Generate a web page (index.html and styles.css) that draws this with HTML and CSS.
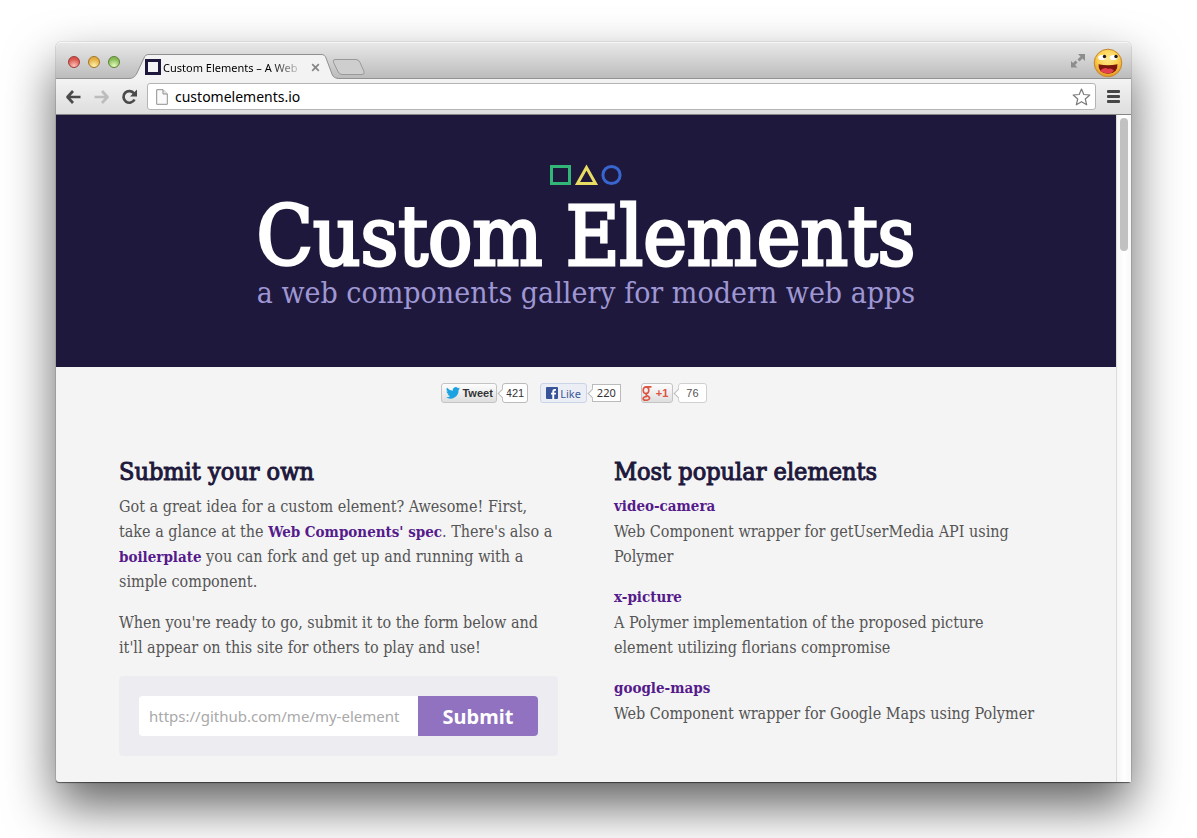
FILE: index.html
```html
<!DOCTYPE html>
<html lang="en">
<head>
<meta charset="utf-8">
<title>Custom Elements</title>
<link rel="stylesheet" href="styles.css">
</head>
<body>
<div class="window">
  <header class="titlebar">
    <div class="lights">
      <button class="light light-red" aria-label="Close window"></button>
      <button class="light light-yellow" aria-label="Minimize window"></button>
      <button class="light light-green" aria-label="Zoom window"></button>
    </div>
    <div class="tab">
      <svg class="tab-shape" width="212" height="25" viewBox="0 0 212 25" aria-hidden="true">
        <path d="M0 24.500C5 24.500 7 23 9 19L16 4C17 1.500 18 .5 21 .5H193C196 .5 197 1.500 198 4L204 20C205 23 207 24.500 212 24.500V25H0Z" fill="#f3f3f3"/>
        <path d="M0 24.500C5 24.500 7 23 9 19L16 4C17 1.500 18 .5 21 .5H193C196 .5 197 1.500 198 4L204 20C205 23 207 24.500 212 24.500" fill="none" stroke="#8f8f8f"/>
      </svg>
      <div class="tab-content">
        <svg width="16" height="16" viewBox="0 0 16 16" aria-hidden="true"><path d="M1.500 1.500h13v13h-13z" fill="#f4f4f4" stroke="#1e193c" stroke-width="3"/></svg>
        <span class="tab-title">Custom Elements – A Web</span>
        <button class="tab-close" aria-label="Close tab"><svg width="9" height="9" viewBox="0 0 9 9"><path d="M1.200 1.200l6.600 6.600M7.800 1.200L1.200 7.800" stroke="#858585" stroke-width="1.700"/></svg></button>
      </div>
    </div>
    <button class="new-tab" aria-label="New tab"><svg width="34" height="18" viewBox="0 0 34 18"><path d="M3 1.500h21q3 0 4 3l4 9q1 3-2 3H10q-3 0-4-3l-4.500-9q-1-3 1.500-3z" fill="#cecece" stroke="#999"/></svg></button>
    <div class="title-actions">
      <button class="icon-button expand" aria-label="Full screen"><svg width="16" height="16" viewBox="0 0 16 16" fill="#8d8d8d"><path d="M8 1h7v7l-2.500-2.500-3 3-2-2 3-3zM1 8l2 2 2.500-2.500 2 2L5 12l2.500 2.500H1z"/></svg></button>
      <svg class="avatar" width="30" height="30" viewBox="0 0 30 30" role="img" aria-label="Profile">
        <defs><radialGradient id="face" cx=".5" cy=".35" r=".7"><stop offset="0" stop-color="#ffe98a"/><stop offset=".55" stop-color="#fdcf4e"/><stop offset="1" stop-color="#dd8a18"/></radialGradient></defs>
        <circle cx="15" cy="15" r="13.800" fill="url(#face)" stroke="#c48632"/>
        <ellipse cx="9" cy="9.500" rx="3.800" ry="2.600" fill="#fff"/><ellipse cx="20.500" cy="9.500" rx="3.800" ry="2.600" fill="#fff"/>
        <circle cx="11.500" cy="8.500" r="1.700" fill="#221b1b"/><circle cx="23" cy="8.500" r="1.700" fill="#221b1b"/>
        <path d="M5.500 16.300Q15 18 24.500 16.300Q25 25.500 15 25.800Q5 25.500 5.500 16.300Z" fill="#7b160d"/>
        <path d="M7 23Q11 18.500 15 21Q18 19.500 21 22.800Q19 25.500 15 25.500Q10 25.300 7 23Z" fill="#e5404f"/>
      </svg>
    </div>
  </header>
  <nav class="toolbar" aria-label="Browser">
    <button class="icon-button" aria-label="Back"><svg width="17" height="16" viewBox="0 0 17 16"><path d="M8 2L2.500 8 8 14M3 8h12.500" fill="none" stroke="#4a4a4a" stroke-width="2.700" stroke-linejoin="round"/></svg></button>
    <button class="icon-button" aria-label="Forward"><svg width="17" height="16" viewBox="0 0 17 16"><path d="M9 2l5.500 6L9 14M14 8H1.500" fill="none" stroke="#bdbdbd" stroke-width="2.700" stroke-linejoin="round"/></svg></button>
    <button class="icon-button" aria-label="Reload"><svg width="17" height="16" viewBox="0 0 17 16"><path d="M13 4.500A5.800 5.800 0 1 0 13.500 10.500" fill="none" stroke="#4a4a4a" stroke-width="2.700"/><path d="M16 .5v7H9z" fill="#4a4a4a"/></svg></button>
    <div class="address">
      <svg width="12" height="16" viewBox="0 0 12 16" aria-hidden="true"><path d="M.7.7H7L11.300 5v10.300H.7z" fill="#fafafa" stroke="#8f8f8f"/><path d="M7 .7V5h4.300" fill="#e8e8e8" stroke="#8f8f8f"/></svg>
      <input class="address-input" aria-label="Address" value="customelements.io">
      <button class="icon-button" aria-label="Bookmark"><svg width="19" height="18" viewBox="0 0 19 18"><path d="M9.500 1l2.300 5.500 6 .5-4.500 4 1.400 5.800-5.200-3.100-5.200 3.100L5.700 11 1.200 7l6-.5z" fill="#fff" stroke="#7b7b7b" stroke-width="1.200" stroke-linejoin="round"/></svg></button>
    </div>
    <button class="icon-button menu" aria-label="Menu"><svg width="14" height="14" viewBox="0 0 14 14" fill="#464646"><rect width="13" height="3" rx="1"/><rect y="5" width="13" height="3" rx="1"/><rect y="10" width="13" height="3" rx="1"/></svg></button>
  </nav>
  <div class="viewport">
    <div class="page">
      <div class="hero">
        <svg width="74" height="22" viewBox="0 0 74 22" fill="none" stroke-width="3" aria-hidden="true"><path d="M2.500 2.500h18v17h-18z" stroke="#31b678"/><path d="M37.500 3.500L28.500 19.500h18z" stroke="#e9dc63"/><circle cx="62.500" cy="11" r="8.600" stroke="#3865d0"/></svg>
        <h1 class="title">Custom Elements</h1>
        <p class="tagline">a web components gallery for modern web apps</p>
      </div>
      <div class="share">
        <div class="share-item">
          <button class="share-button"><svg width="14" height="12" viewBox="0 0 24 20" fill="#1aa3e0"><path d="M24 2.400a10 10 0 0 1-2.800.8A5 5 0 0 0 23.300.4a10 10 0 0 1-3.100 1.200 4.900 4.900 0 0 0-8.400 4.500A14 14 0 0 1 1.700.9a4.900 4.900 0 0 0 1.500 6.600A5 5 0 0 1 1 6.900c0 2.400 1.700 4.400 3.900 4.900a5 5 0 0 1-2.200.1 4.900 4.900 0 0 0 4.600 3.400A10 10 0 0 1 0 17.300 14 14 0 0 0 21.500 4.900 10 10 0 0 0 24 2.400z"/></svg>Tweet</button>
          <a class="count" href="#">421</a>
        </div>
        <div class="share-item share-like">
          <button class="share-button like"><svg width="12" height="12" viewBox="0 0 12 12"><rect width="12" height="12" rx="1" fill="#37549b"/><path d="M6.300 12V7.500H5V5.700h1.300V4.500C6.300 2.800 7.300 2 8.700 2H10v1.800h-.9c-.6 0-.9.300-.9.900v1H10l-.2 1.800H8.200V12z" fill="#fff"/></svg>Like</button>
          <a class="count square" href="#">220</a>
        </div>
        <div class="share-item">
          <button class="share-button plus"><svg width="10" height="15" viewBox="0 0 10 15" fill="none" stroke="#dd5440" stroke-width="1.600"><ellipse cx="4" cy="4.200" rx="2.800" ry="3.300"/><path d="M4 .9h5.500M5.500 7q-3 1.500 0 3c4 2 1.500 4.300-1.500 4.300-4 0-4-3.600 1-3.800"/></svg>+1</button>
          <a class="count pale" href="#">76</a>
        </div>
      </div>
      <main class="columns">
        <section>
          <h2 class="heading">Submit your own</h2>
          <p class="text">Got a great idea for a custom element? Awesome! First, take a glance at the <a class="link" href="#">Web Components' spec</a>. There's also a <a class="link" href="#">boilerplate</a> you can fork and get up and running with a simple component.</p>
          <p class="text">When you're ready to go, submit it to the form below and it'll appear on this site for others to play and use!</p>
          <form class="submit-form">
            <input class="url" type="url" aria-label="Element repository" placeholder="https://github.com/me/my-element">
            <button class="submit" type="button">Submit</button>
          </form>
        </section>
        <section class="popular">
          <h2 class="heading">Most popular elements</h2>
          <p class="text"><a class="link block" href="#">video-camera</a>Web Component wrapper for getUserMedia API using Polymer</p>
          <p class="text"><a class="link block" href="#">x-picture</a>A Polymer implementation of the proposed picture element utilizing florians compromise</p>
          <p class="text"><a class="link block" href="#">google-maps</a>Web Component wrapper for Google Maps using Polymer</p>
        </section>
      </main>
    </div>
    <div class="scrollbar"><div class="thumb"></div></div>
  </div>
</div>
</body>
</html>
```
FILE: styles.css
```css
* { box-sizing: border-box; }
body {
  margin: 0;
  min-height: 100vh;
  padding: 42px 66px 56px 56px;
  display: flex;
  background: #fff;
  font-family: "DejaVu Serif Condensed", "DejaVu Serif", serif;
}
button { border: 0; padding: 0; background: none; font: inherit; color: inherit; }
input { border: 0; outline: 0; min-width: 0; font: inherit; }
svg { display: block; flex: none; }
h1, h2, p { margin: 0; }

.window {
  flex: 1;
  min-width: 0;
  display: flex;
  flex-direction: column;
  border-radius: 5px 5px 3px 3px;
  background: #f4f4f4;
  box-shadow: 0 0 1px rgba(0, 0, 0, .6), 0 1px 1px rgba(0, 0, 0, .5), 0 24px 50px rgba(0, 0, 0, .62);
}

.titlebar {
  height: 37px;
  display: flex;
  align-items: flex-end;
  border-bottom: 1px solid #929292;
  border-radius: 5px 5px 0 0;
  background: linear-gradient(#e9e9e9, #bcbcbc);
  box-shadow: inset 0 1px #f6f6f6;
  font-family: "Noto Sans", sans-serif;
}
.lights { display: flex; gap: 8px; padding: 0 8px 10px 12px; }
.light { width: 12px; height: 12px; border-radius: 50%; border: 1px solid #777; }
.light-red { background: radial-gradient(circle at 50% 90%, #ffc5bc, #d8534b 70%); border-color: #9d3b35; }
.light-yellow { background: radial-gradient(circle at 50% 90%, #fff3b0, #e3ac40 70%); border-color: #a47625; }
.light-green { background: radial-gradient(circle at 50% 90%, #e6ffbe, #86b956 70%); border-color: #5b8236; }
.tab { display: grid; margin-bottom: -1px; }
.tab-shape, .tab-content { grid-area: 1 / 1; }
.tab-content { display: flex; align-items: center; padding: 1px 20px 0 17px; }
.tab-title {
  padding-left: 2px;
  font-size: 11px;
  white-space: nowrap;
  color: transparent;
  background: linear-gradient(90deg, #000 80%, transparent 105%);
  -webkit-background-clip: text;
  background-clip: text;
}
.tab-close { margin-left: auto; }
.new-tab { margin-bottom: 2px; margin-left: -8px; }
.title-actions { margin-left: auto; display: flex; align-items: center; gap: 7px; padding-right: 8px; }
.expand { padding-bottom: 5px; }

.toolbar {
  height: 36px;
  display: flex;
  align-items: center;
  gap: 11px;
  padding: 0 10px 0 9px;
  border-bottom: 1px solid #858585;
  background: linear-gradient(#f3f3f3, #dedede);
  font-family: "Noto Sans", sans-serif;
}
.address {
  flex: 1;
  height: 27px;
  display: flex;
  align-items: center;
  gap: 7px;
  margin-left: -2px;
  padding: 0 4px 0 8px;
  border: 1px solid #b4b4b4;
  border-radius: 3px;
  background: #fff;
}
.address-input { flex: 1; padding: 0 0 1px; font-size: 14px; color: #000; background: none; }

.viewport { flex: 1; display: flex; }
.page { flex: 1; min-width: 0; }
.hero {
  display: flex;
  flex-direction: column;
  align-items: center;
  padding: 49px 0 59px;
  background: #1e193c;
  text-align: center;
}
.title { margin-top: 11px; font-size: 82px; line-height: 80px; font-weight: normal; color: #fff; -webkit-text-stroke: 3px #fff; }
.tagline { font-size: 30px; line-height: 31px; color: #9f97d4; }

.share { display: flex; justify-content: center; padding: 16px 24px 0 0; font-family: "Liberation Sans", sans-serif; }
.share-item { display: flex; align-items: center; gap: 5px; margin-right: 12px; }
.share-item:last-child { margin-right: 0; }
.share-like { margin-right: 20px; font-family: "Noto Sans", sans-serif; }
.share-button {
  height: 20px;
  display: flex;
  align-items: center;
  gap: 2px;
  padding: 0 3px 0 4px;
  border: 1px solid #c4c4c4;
  border-radius: 3px;
  background: linear-gradient(#fdfdfd, #dedede);
  font-size: 11px;
  font-weight: bold;
  color: #333;
}
.share-button.like { padding: 0 5px; border-color: #cad4e7; background: #eceef5; font-weight: normal; color: #3b5998; }
.share-button.plus { padding: 0 4px 0 0; gap: 4px; color: #dd5440; }
.count {
  position: relative;
  height: 20px;
  padding: 0 3px;
  border: 1px solid #bbb;
  border-radius: 3px;
  background: #fff;
  font-size: 11px;
  line-height: 18px;
  color: #333;
  text-decoration: none;
}
.count::before {
  content: "";
  position: absolute;
  left: -4px;
  top: 6px;
  width: 6px;
  height: 6px;
  border: solid #bbb;
  border-width: 0 0 1px 1px;
  background: #fff;
  transform: rotate(45deg);
}
.count.square { height: 18px; padding: 0 4px; line-height: 16px; border-radius: 0; }
.count.square::before { top: 5px; }
.count.pale { padding: 0 7px; border-color: #d0d0d0; color: #555; }

.columns { display: grid; grid-template-columns: 1fr 1fr; gap: 56px; padding: 51px 63px 26px; }
.popular { padding-right: 8px; }
.heading { margin-bottom: 4px; font-size: 25px; line-height: 36px; font-weight: normal; color: #1e193c; -webkit-text-stroke: 1px #1e193c; }
.text { margin-bottom: 16px; font-size: 16px; line-height: 25px; color: #555; }
.link { color: #551a8b; font-size: 15px; line-height: 20px; font-weight: bold; text-decoration: none; }
.block { display: block; line-height: 25px; }
.submit-form { display: flex; padding: 20px; border-radius: 4px; background: #edecf1; font-family: "Noto Sans", sans-serif; }
.url { flex: 1; height: 40px; padding: 0 10px; border-radius: 4px 0 0 4px; background: #fff; font-size: 15px; }
.url::placeholder { color: #a9a9a9; }
.submit { width: 120px; height: 40px; border-radius: 0 4px 4px 0; background: #9072c0; font-size: 20px; font-weight: bold; color: #fff; }

.scrollbar { width: 15px; padding: 3px 3px 0; border-left: 1px solid #dcdcdc; background: linear-gradient(90deg, #f5f5f5, #fff 50%, #f8f8f8); }
.thumb { height: 133px; border-radius: 4px; background: #c1c1c1; }
```
